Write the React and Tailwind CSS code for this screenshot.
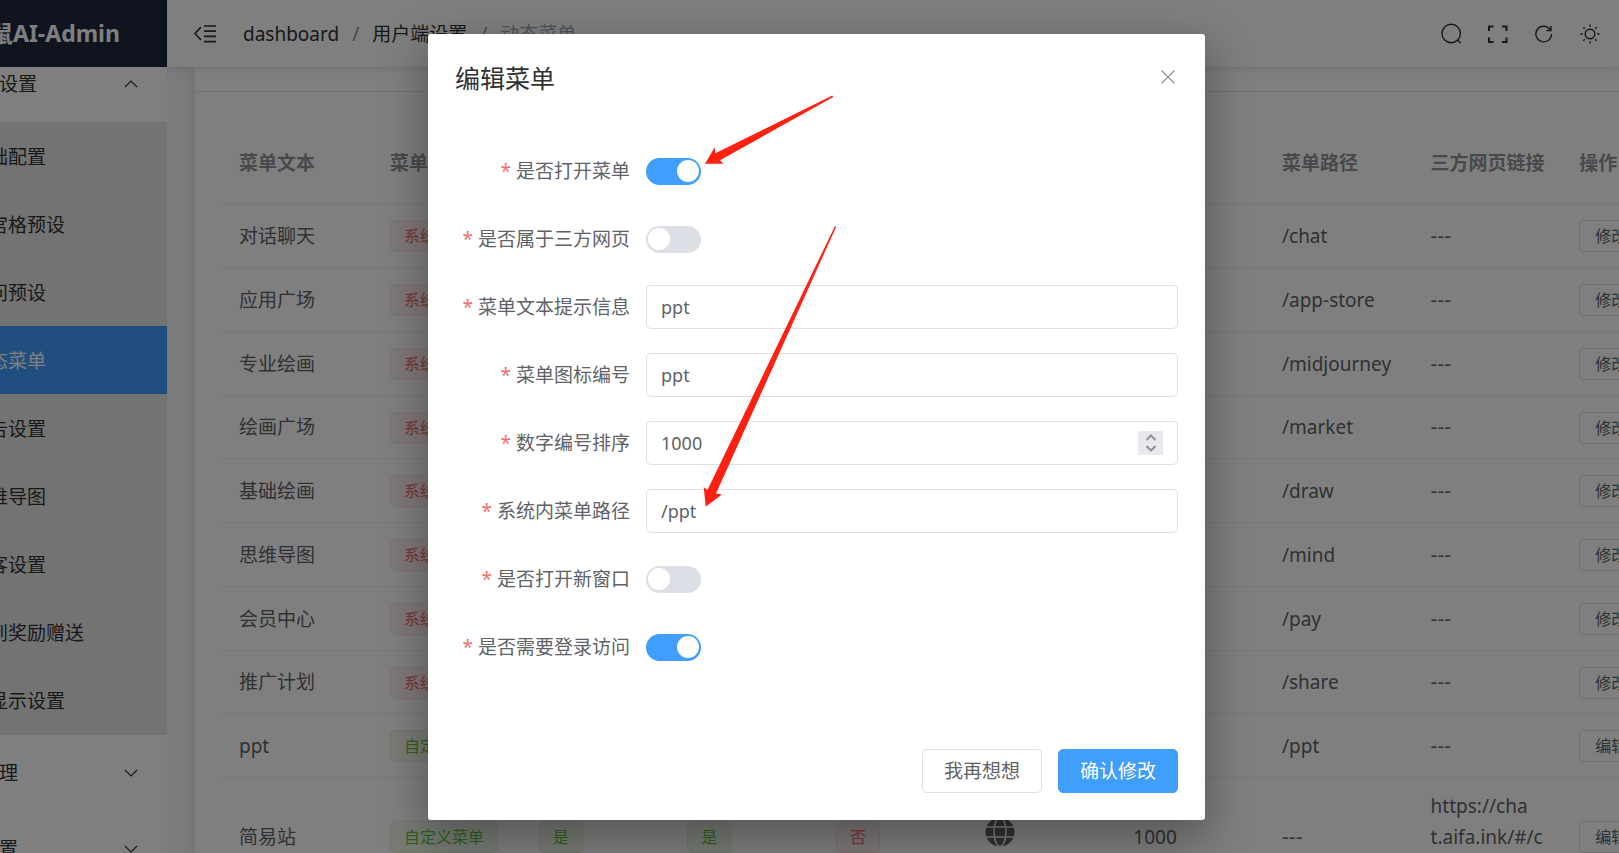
import { useState } from "react";

const sections = [
  {
    label: "用户端设置",
    open: true,
    items: ["基础配置", "九宫格预设", "提问预设", "动态菜单", "公告设置", "思维导图", "博客设置", "签到奖励赠送", "页显示设置"],
  },
  { label: "用户管理", open: false, items: [] },
  { label: "系统设置", open: false, items: [] },
];

const systemRows = [
  ["对话聊天", "/chat"],
  ["应用广场", "/app-store"],
  ["专业绘画", "/midjourney"],
  ["绘画广场", "/market"],
  ["基础绘画", "/draw"],
  ["思维导图", "/mind"],
  ["会员中心", "/pay"],
  ["推广计划", "/share"],
].map(([text, path], i) => ({ text, path, custom: false, order: 100 * (i + 1) }));

const rows = [
  ...systemRows,
  { text: "ppt", path: "/ppt", custom: true, order: 1000 },
  { text: "简易站", path: null, custom: true, order: 1000, link: ["https://cha", "t.aifa.ink/#/c", "hat"] },
];

const columns = ["菜单文本", "菜单类型", "是否开启", "是否登录", "新窗口", "菜单图标", "排序", "菜单路径", "三方网页链接", "操作"];

function Chevron({ up }) {
  return (
    <svg className="h-4 w-4 text-[#303133]" viewBox="0 0 16 16" fill="none" stroke="currentColor" strokeWidth="1.2">
      <path d={up ? "M2 11 8 5l6 6" : "M2 5 8 11l6-6"} />
    </svg>
  );
}

function Globe() {
  return (
    <svg className="h-[30px] w-[30px] text-[#606266]" viewBox="0 0 30 30">
      <circle cx="15" cy="15" r="14.5" fill="currentColor" />
      <g fill="none" stroke="#fff" strokeWidth="1.5">
        <ellipse cx="15" cy="15" rx="6" ry="14.5" />
        <path d="M0 10h30M0 20h30" />
      </g>
    </svg>
  );
}

function Tag({ tone, children }) {
  const tones = {
    red: "border-[#fde2e2] bg-[#fef0f0] text-[#f56c6c]",
    green: "border-[#e1f3d8] bg-[#f0f9eb] text-[#67c23a]",
  };
  return (
    <span className={`inline-flex h-8 items-center rounded-[5px] border px-[13px] align-middle text-base whitespace-nowrap ${tones[tone]}`}>
      {children}
    </span>
  );
}

function Empty() {
  return <span className="font-['DejaVu_Sans',sans-serif] text-[#606266]">---</span>;
}

function Sidebar() {
  return (
    <aside className="flex w-[225px] shrink-0 flex-col bg-white text-[#303133]">
      <div className="flex h-[67px] shrink-0 items-center bg-[#20283f] pl-12 text-[23px] font-bold whitespace-nowrap text-white">
        鼠AI-Admin
      </div>
      <nav className="-mt-[21px] min-h-0 flex-1 overflow-hidden [clip-path:inset(21px_0_0_0)]">
        {sections.map((s) => (
          <div key={s.label}>
            <button type="button" className="flex h-[76px] w-full items-center justify-between pr-7">
              {s.label}
              <Chevron up={s.open} />
            </button>
            {s.items.length > 0 && (
              <ul className="bg-[#e7e7e7] pb-px">
                {s.items.map((item) => (
                  <li key={item}>
                    <a
                      href="#menu"
                      className={`flex h-[68px] items-center pt-0.5 pl-7 ${item === "动态菜单" ? "bg-[#409eff] text-white" : ""}`}
                    >
                      {item}
                    </a>
                  </li>
                ))}
              </ul>
            )}
          </div>
        ))}
      </nav>
    </aside>
  );
}

function IconButton({ label, children }) {
  return (
    <button type="button" aria-label={label} className="text-[#303133]">
      <svg className="h-[22px] w-[22px]" viewBox="0 0 22 22" fill="none" stroke="currentColor" strokeWidth="1.4">
        {children}
      </svg>
    </button>
  );
}

function Header() {
  return (
    <header className="relative flex h-[67px] shrink-0 items-center justify-between bg-white pr-[18px] pl-[26px] shadow-[0_1px_8px_rgba(0,21,41,0.16)]">
      <div className="flex items-center gap-[26px]">
        <button type="button" aria-label="收起" className="text-[#303133]">
          <svg className="h-6 w-6" viewBox="0 0 24 24" fill="none" stroke="currentColor" strokeWidth="1.7">
            <path d="M8 5 2 11.500l6 6.500M11 4h12M11 9.200h12M11 14.400h12M11 19.600h12" />
          </svg>
        </button>
        <nav className="flex items-center gap-[13px] pt-0.5 whitespace-nowrap text-[#303133]">
          <a href="#dashboard">dashboard</a>
          <span className="text-[#909399]">/</span>
          <a href="#client">用户端设置</a>
          <span className="text-[#909399]">/</span>
          <span className="text-[#97a8be]">动态菜单</span>
        </nav>
      </div>
      <div className="flex items-center gap-6">
        <IconButton label="搜索">
          <circle cx="10.200" cy="10.500" r="9.200" />
          <path d="m16.500 17 3 3" />
        </IconButton>
        <IconButton label="全屏">
          <path strokeWidth="2" d="M2 8V3.500h4.500M15 3.500h4.500V8M19.500 14.500V19H15M6.500 19H2v-4.500" />
        </IconButton>
        <IconButton label="刷新">
          <path d="M18.500 11a7.800 7.800 0 1 1-2.300-5.500l1.800 1.700M18 3v4.500h-4.500" />
        </IconButton>
        <IconButton label="主题">
          <circle cx="11" cy="11" r="4.800" />
          <path d="M11 1.500v2.200M11 18.300v2.200M1.500 11h2.200M18.300 11h2.200M4.300 4.300l1.500 1.500M16.200 16.200l1.500 1.500M4.300 17.700l1.500-1.500M16.200 5.800l1.500-1.500" />
        </IconButton>
      </div>
    </header>
  );
}

function rowHeight(row, index) {
  if (row.link) return "h-[118px]";
  return index % 4 === 3 ? "h-[63px]" : "h-16";
}

function MenuTable() {
  const cell = "px-4 pt-0.5";
  return (
    <table className="w-[1489px] table-fixed border-collapse text-left text-[#606266]">
      <colgroup>
        <col className="w-[151px]" />
        {columns.slice(1).map((c) => (
          <col key={c} />
        ))}
      </colgroup>
      <thead>
        <tr className="h-[84px] border-b border-[#ebeef5] text-[#909399]">
          {columns.map((c) => (
            <th key={c} className="px-4 pt-1 font-bold whitespace-nowrap">
              {c}
            </th>
          ))}
        </tr>
      </thead>
      <tbody>
        {rows.map((r, i) => (
          <tr key={r.text} className={`border-b border-[#ebeef5] ${rowHeight(r, i)}`}>
            <td className={cell}>{r.text}</td>
            <td className={cell}>
              <Tag tone={r.custom ? "green" : "red"}>{r.custom ? "自定义菜单" : "系统菜单"}</Tag>
            </td>
            <td className={cell}><Tag tone="green">是</Tag></td>
            <td className={cell}><Tag tone="green">是</Tag></td>
            <td className={cell}><Tag tone="red">否</Tag></td>
            <td className="px-4 pb-2"><Globe /></td>
            <td className={cell}>{r.order}</td>
            <td className={cell}>{r.path || <Empty />}</td>
            <td className={`${cell} leading-[31px]`}>
              {r.link
                ? r.link.map((line) => (
                    <span key={line} className="block whitespace-nowrap">{line}</span>
                  ))
                : <Empty />}
            </td>
            <td className={cell}>
              <button type="button" className="flex h-8 items-center rounded border border-[#dcdfe6] px-[15px] text-base whitespace-nowrap">
                {r.custom ? "编辑" : "修改"}
              </button>
            </td>
          </tr>
        ))}
      </tbody>
    </table>
  );
}

function Field({ id, label, children }) {
  return (
    <div className="flex h-11 items-center gap-4">
      <label htmlFor={id} className="flex w-[175px] shrink-0 justify-end gap-[5px] pt-px whitespace-nowrap">
        <span className="text-[#f56c6c]">*</span>
        {label}
      </label>
      {children}
    </div>
  );
}

function SwitchField({ id, label, on }) {
  const [checked, setChecked] = useState(on);
  return (
    <Field id={id} label={label}>
      <input
        id={id}
        type="checkbox"
        role="switch"
        checked={checked}
        onChange={(e) => setChecked(e.target.checked)}
        className="flex h-[27px] w-[55px] appearance-none items-center rounded-full bg-[#dcdfe6] px-[2px] before:h-[22px] before:w-[22px] before:rounded-full before:bg-white checked:justify-end checked:bg-[#409eff]"
      />
    </Field>
  );
}

const inputClass =
  "h-11 w-full min-w-0 appearance-none rounded-[5px] border border-[#dcdfe6] bg-white px-[14px] text-lg text-[#606266] outline-none";

function TextField({ id, label, value }) {
  return (
    <Field id={id} label={label}>
      <input id={id} type="text" defaultValue={value} className={inputClass} />
    </Field>
  );
}

function Dialog() {
  return (
    <div role="dialog" aria-labelledby="dialog-title" className="relative w-[777px] max-w-full rounded-[3px] bg-white shadow-[0_16px_44px_5px_rgba(0,0,0,0.3)]">
      <div className="flex h-[88px] items-center justify-between px-[27px]">
        <h2 id="dialog-title" className="pt-0.5 text-[25px] text-[#303133]">编辑菜单</h2>
        <button type="button" aria-label="关闭" className="pb-0.5 text-[#909399]">
          <svg className="h-5 w-5" viewBox="0 0 20 20" fill="none" stroke="currentColor" strokeWidth="1.400">
            <path d="m3.500 3.500 13 13M16.500 3.500l-13 13" />
          </svg>
        </button>
      </div>
      <form className="flex flex-col gap-6 px-[27px] pt-[27px] text-[#606266]">
        <SwitchField id="open" label="是否打开菜单" on />
        <SwitchField id="third" label="是否属于三方网页" on={false} />
        <TextField id="tip" label="菜单文本提示信息" value="ppt" />
        <TextField id="icon" label="菜单图标编号" value="ppt" />
        <Field id="order" label="数字编号排序">
          <div className="relative min-w-0 flex-1">
            <input id="order" type="number" defaultValue={1000} className={`${inputClass} [appearance:textfield]`} />
            <span className="absolute top-[10px] right-[15px] flex h-6 w-[25px] items-center justify-center bg-[#e8e8ed]">
              <svg className="h-5 w-3 text-[#8f8f9d]" viewBox="0 0 12 20" fill="none" stroke="currentColor" strokeWidth="2">
                <path d="m1.500 7 4.500-4.500L10.500 7M1.500 13 6 17.500l4.500-4.500" />
              </svg>
            </span>
          </div>
        </Field>
        <TextField id="path" label="系统内菜单路径" value="/ppt" />
        <SwitchField id="window" label="是否打开新窗口" on={false} />
        <SwitchField id="login" label="是否需要登录访问" on />
      </form>
      <div className="flex justify-end gap-4 px-[27px] pt-20 pb-[27px]">
        <button type="button" className="h-11 rounded-[5px] border border-[#dcdfe6] px-[21px] text-[#606266]">我再想想</button>
        <button type="button" className="h-11 rounded-[5px] border border-[#409eff] bg-[#409eff] px-[21px] text-white">确认修改</button>
      </div>
      <svg className="pointer-events-none absolute top-0 left-0 h-[500px] w-[420px] text-[#ff2012]" viewBox="428 34 420 500" fill="currentColor">
        <path d="M705 163.700 714.700 147.300 715.300 153.200 832.300 95.600 833.200 97 720 160.300 723.200 163.700Z" />
        <path d="M705.700 506.700 703.700 487 707.300 490.200 835 226 836.200 226.700 716 493.500 721.900 494.400Z" />
      </svg>
    </div>
  );
}

export default function App() {
  return (
    <div className="relative h-screen overflow-hidden bg-white font-['Noto_Sans','Noto_Sans_CJK_SC',sans-serif] text-[19px]">
      <div className="-ml-[58px] flex h-full">
        <Sidebar />
        <div className="flex min-w-0 flex-1 flex-col bg-[#f5f7fa]">
          <Header />
          <main className="min-h-0 flex-1 overflow-hidden pl-7">
            <section className="h-full bg-white shadow-[0_0_16px_rgba(0,0,0,0.12)]">
              <div className="h-[25px] border-b border-[#e4e7ed]" />
              <div className="overflow-hidden pt-[27px] pl-7">
                <MenuTable />
              </div>
            </section>
          </main>
        </div>
      </div>
      <div className="absolute inset-0 flex items-start justify-center bg-black/50 pt-[34px] pl-[14px]">
        <Dialog />
      </div>
    </div>
  );
}
